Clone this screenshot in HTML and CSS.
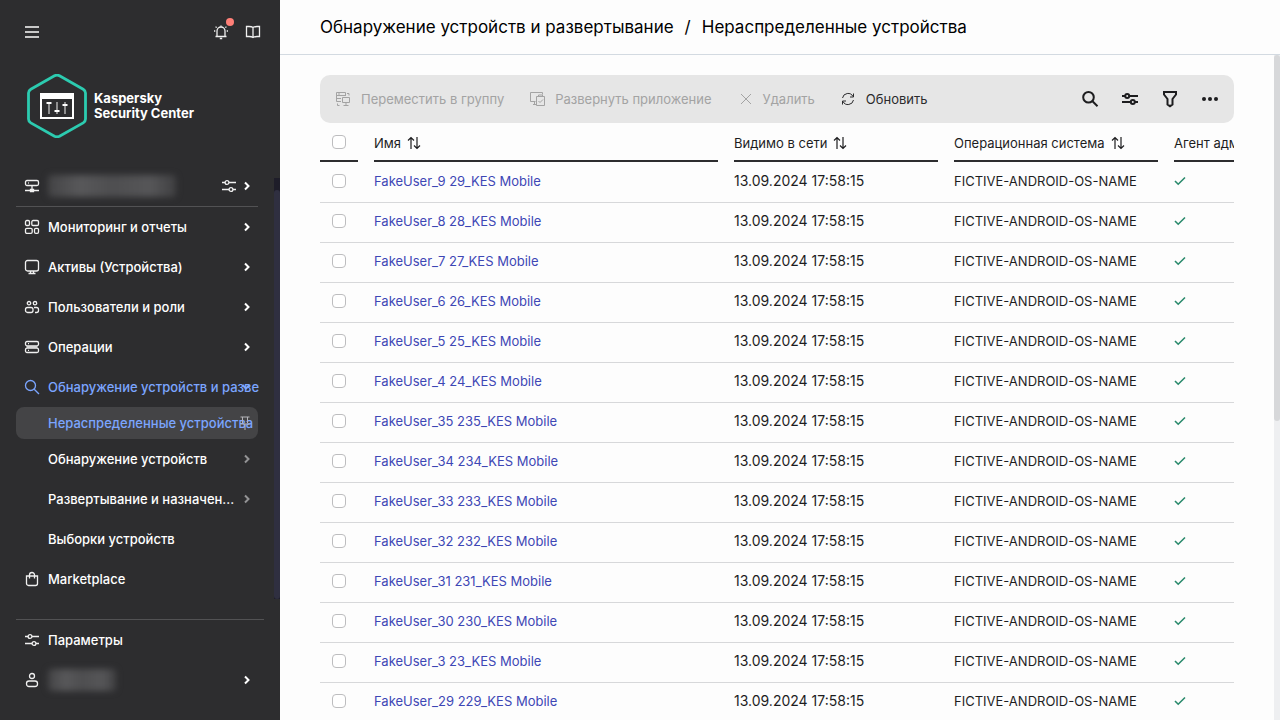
FILE: index.html
```
<!DOCTYPE html>
<html lang="ru">
<head>
<meta charset="utf-8">
<title>Нераспределенные устройства</title>
<link rel="stylesheet" href="styles.css">
</head>
<body>
<div class="app">
  <aside class="sidebar">
    <div class="topbar">
      <button class="icon-btn" type="button" aria-label="Меню">
        <svg class="icon burger" viewBox="0 0 16 16"><path d="M1 3h14M1 8h14M1 13h14"/></svg>
      </button>
      <div class="topbar-right">
        <button class="icon-btn bell" type="button" aria-label="Уведомления">
          <svg class="icon" viewBox="0 0 16 16"><path d="M2.500 12.500h11M4 12.500V7a4 4 0 0 1 8 0v5.500M6.800 14.500h2.400M1 7h1.300M13.700 7H15M2.600 2.600l1 1M13.400 2.600l-1 1M8 1.500V3"/></svg>
          <span class="dot"></span>
        </button>
        <button class="icon-btn" type="button" aria-label="Справка">
          <svg class="icon" viewBox="0 0 16 16"><path d="M8 3.500C7 2.700 5.500 2.500 4 2.500H1.500v10H4c1.500 0 3 .2 4 1 1-.8 2.500-1 4-1h2.500v-10H12c-1.500 0-3 .2-4 1zM8 3.500v10"/></svg>
        </button>
      </div>
    </div>
    <div class="brand">
      <svg class="brand-logo" viewBox="0 0 60 64" aria-hidden="true">
        <path d="M27.500 1.800 3.800 15.200Q1.500 16.600 1.500 19V45q0 2.500 2.300 3.900L27.500 62.200q2.500 1.300 5 0L56.200 48.900Q58.500 47.500 58.500 45V19q0-2.400-2.300-3.800L32.500 1.800q-2.500-1.300-5 0z" fill="none" stroke="#2ccbb0" stroke-width="2.800"/>
        <rect x="14" y="20" width="32" height="24" fill="none" stroke="#fff" stroke-width="2"/>
        <path d="M13 19h34v6H13z" fill="#fff" stroke="none"/>
        <path d="M22 28v12M30 28v12M38 28v12" stroke="#a8a8a8" stroke-width="1.600"/>
        <path d="M19.500 29h5M27.500 37h5M35.500 31h5" stroke="#fff" stroke-width="2"/>
      </svg>
      <div class="brand-name">Kaspersky<br>Security Center</div>
    </div>
    <div class="nav-scroll">
      <nav class="nav">
        <div class="nav-row server">
          <svg class="icon" viewBox="0 0 16 16"><rect x="1.500" y="2.500" width="13" height="5" rx="1.500"/><path d="M4 5h.8M8 7.500v5M1 12.500h14M6.500 11.500h3v2h-3z"/></svg>
          <span class="redacted server-name"></span>
          <button class="icon-btn settings" type="button" aria-label="Свойства">
            <svg class="icon" viewBox="0 0 16 16"><path d="M1 4.500h3.200M8 4.500h7M1 11.500h7M12 11.500h3"/><circle cx="6" cy="4.500" r="1.900"/><circle cx="10" cy="11.500" r="1.900"/></svg>
          </button>
          <svg class="chevron" viewBox="0 0 8 10"><path d="M2 1.500 5.500 5 2 8.500"/></svg>
        </div>
        <a class="nav-row" href="#">
          <svg class="icon" viewBox="0 0 16 16"><rect x="1.500" y="1.500" width="4" height="5" rx="1.300"/><rect x="7.800" y="1.500" width="6.700" height="5" rx="1.300"/><rect x="1.500" y="9.300" width="6.700" height="5" rx="1.300"/><rect x="10.500" y="9.300" width="4" height="5" rx="1.300"/></svg>
          <span class="label">Мониторинг и отчеты</span>
          <svg class="chevron" viewBox="0 0 8 10"><path d="M2 1.500 5.500 5 2 8.500"/></svg>
        </a>
        <a class="nav-row" href="#">
          <svg class="icon" viewBox="0 0 16 16"><rect x="1.500" y="1.500" width="13" height="10.500" rx="2"/><path d="M6.500 12v2.500M9.500 12v2.500M4.500 14.500h7"/></svg>
          <span class="label">Активы (Устройства)</span>
          <svg class="chevron" viewBox="0 0 8 10"><path d="M2 1.500 5.500 5 2 8.500"/></svg>
        </a>
        <a class="nav-row" href="#">
          <svg class="icon" viewBox="0 0 16 16"><circle cx="5" cy="4.200" r="1.700"/><circle cx="11" cy="4.200" r="1.700"/><rect x="1.500" y="8.500" width="7.500" height="5" rx="2"/><path d="M10 8.500h2.500a2 2 0 0 1 2 2v1a2 2 0 0 1-2 2H11"/></svg>
          <span class="label">Пользователи и роли</span>
          <svg class="chevron" viewBox="0 0 8 10"><path d="M2 1.500 5.500 5 2 8.500"/></svg>
        </a>
        <a class="nav-row" href="#">
          <svg class="icon" viewBox="0 0 16 16"><rect x="1.500" y="2.500" width="13" height="4.300" rx="1.500"/><rect x="1.500" y="9.200" width="13" height="4.300" rx="1.500"/><path d="M4 4.600h1M4 11.400h1M2.500 8h11"/></svg>
          <span class="label">Операции</span>
          <svg class="chevron" viewBox="0 0 8 10"><path d="M2 1.500 5.500 5 2 8.500"/></svg>
        </a>
        <a class="nav-row active" href="#">
          <svg class="icon" viewBox="0 0 16 16"><circle cx="6.500" cy="6.500" r="5"/><path d="m10.200 10.200 4.800 4.800"/></svg>
          <span class="label">Обнаружение устройств и разве</span>
          <svg class="chevron over" viewBox="0 0 10 8"><path d="M1.500 2 5 5.500 8.500 2"/></svg>
        </a>
        <a class="nav-row sub selected" href="#">
          <span class="label">Нераспределенные устройства</span>
          <svg class="pin over" viewBox="0 0 12 16"><path d="M1.500 2h9M3.500 2v6M8.500 2v6M1.500 9h9M6 9v6"/></svg>
        </a>
        <a class="nav-row sub dim" href="#">
          <span class="label">Обнаружение устройств</span>
          <svg class="chevron" viewBox="0 0 8 10"><path d="M2 1.500 5.500 5 2 8.500"/></svg>
        </a>
        <a class="nav-row sub dim" href="#">
          <span class="label">Развертывание и назначен...</span>
          <svg class="chevron" viewBox="0 0 8 10"><path d="M2 1.500 5.500 5 2 8.500"/></svg>
        </a>
        <a class="nav-row sub" href="#"><span class="label">Выборки устройств</span></a>
        <a class="nav-row" href="#">
          <svg class="icon" viewBox="0 0 16 16"><path d="M2.500 5h11v7.500a2 2 0 0 1-2 2h-7a2 2 0 0 1-2-2zM5.500 7.500V4a2.500 2.500 0 0 1 5 0v3.500"/></svg>
          <span class="label">Marketplace</span>
        </a>
      </nav>
      <div class="nav-track"><div class="nav-thumb"></div></div>
    </div>
    <div class="bottom">
      <a class="nav-row" href="#">
        <svg class="icon" viewBox="0 0 16 16"><path d="M1 4.500h3.200M8 4.500h7M1 11.500h7M12 11.500h3"/><circle cx="6" cy="4.500" r="1.900"/><circle cx="10" cy="11.500" r="1.900"/></svg>
        <span class="label">Параметры</span>
      </a>
      <div class="nav-row">
        <svg class="icon" viewBox="0 0 16 16"><circle cx="8" cy="4" r="2.500"/><rect x="2.500" y="9" width="11" height="5.500" rx="2.500"/></svg>
        <span class="redacted user-name"></span>
        <svg class="chevron" viewBox="0 0 8 10"><path d="M2 1.500 5.500 5 2 8.500"/></svg>
      </div>
    </div>
  </aside>

  <main class="main">
    <header class="crumbs">
      <a href="#">Обнаружение устройств и развертывание</a>
      <span>/</span>
      <span>Нераспределенные устройства</span>
    </header>
    <div class="body">
      <section class="content">
        <div class="toolbar">
          <button class="tool" type="button" disabled>
            <svg class="tool-icon" viewBox="0 0 16 16"><path d="M6 10.500H1.500v-9h9V5M1.500 4.500h9M1.500 7.500H6M3 3h2M12 2.500h2v2M2.500 12.500v2h2M7.500 6.500h7v5h-7zM11 11.500V15M8.500 14.500h5"/></svg>
            <span>Переместить в группу</span>
          </button>
          <button class="tool" type="button" disabled>
            <svg class="tool-icon" viewBox="0 0 16 16"><path d="M6.500 10.500h-5v-9h12v2M4 13.500h3M5.500 10.500v3M7.500 5.500h8v9h-8zM9.500 5.500v-1.500h4v1.500M9.500 10l1.500 1.500L14 8.500"/></svg>
            <span>Развернуть приложение</span>
          </button>
          <button class="tool" type="button" disabled>
            <svg class="tool-icon" viewBox="0 0 16 16"><path d="m4 3 10 10M14 3 4 13"/></svg>
            <span>Удалить</span>
          </button>
          <button class="tool" type="button">
            <svg class="tool-icon" viewBox="0 0 16 16"><path d="M2.500 7A5.600 5.600 0 0 1 13 5.500M13.500 2.500v3.500H10M13.500 9A5.600 5.600 0 0 1 3 10.500M2.500 13.500V10H6"/></svg>
            <span>Обновить</span>
          </button>
          <div class="tool-right">
            <button class="icon-btn" type="button" aria-label="Поиск"><svg class="big" viewBox="0 0 18 18"><circle cx="7.500" cy="7.200" r="5.300"/><path d="m11.500 11.200 5 5"/></svg></button>
            <button class="icon-btn" type="button" aria-label="Столбцы"><svg class="big" viewBox="0 0 18 18"><path d="M1 6h3.500M8 6h9M1 12h9M13.500 12H17"/><circle cx="6.200" cy="6" r="2"/><circle cx="11.800" cy="12" r="2"/></svg></button>
            <button class="icon-btn" type="button" aria-label="Фильтр"><svg class="big" viewBox="0 0 18 18"><path d="M3 2h12v2.500L11.500 9v5.500L9 16.200 6.500 14.500V9L3 4.500z"/></svg></button>
            <button class="icon-btn" type="button" aria-label="Еще"><svg class="big solid" viewBox="0 0 18 18"><circle cx="3" cy="9" r="2"/><circle cx="9" cy="9" r="2"/><circle cx="15" cy="9" r="2"/></svg></button>
          </div>
        </div>
        <div class="table-wrap">
          <table class="grid">
            <colgroup><col class="c-check"><col class="c-name"><col class="c-mid"><col class="c-mid"><col class="c-mid"></colgroup>
            <thead>
              <tr>
                <th><div class="head check"><input type="checkbox" aria-label="Выбрать все"></div></th>
                <th><div class="head">Имя <svg class="sort" viewBox="0 0 14 14"><path d="M4 13V1.500M1 4.500l3-3 3 3M10 1v11.500M7 9.500l3 3 3-3"/></svg></div></th>
                <th><div class="head">Видимо в сети <svg class="sort" viewBox="0 0 14 14"><path d="M4 13V1.500M1 4.500l3-3 3 3M10 1v11.500M7 9.500l3 3 3-3"/></svg></div></th>
                <th><div class="head">Операционная система <svg class="sort" viewBox="0 0 14 14"><path d="M4 13V1.500M1 4.500l3-3 3 3M10 1v11.500M7 9.500l3 3 3-3"/></svg></div></th>
                <th><div class="head">Агент администрирования</div></th>
              </tr>
            </thead>
            <tbody id="rows"></tbody>
          </table>
        </div>
      </section>
      <div class="page-track"><div class="page-thumb"></div></div>
    </div>
  </main>
</div>
<script src="app.js"></script>
</body>
</html>
```
FILE: styles.css
```
* { box-sizing: border-box; }

body {
  margin: 0;
  font-family: Inter, "Noto Sans", sans-serif;
  font-size: 13px;
  line-height: 20px;
  color: #1d1d1f;
  background: #fdfdfd;
}

a { color: inherit; text-decoration: none; }

button {
  padding: 0;
  border: 0;
  background: none;
  font: inherit;
  color: inherit;
}

svg {
  display: block;
  flex: none;
  fill: none;
  stroke: currentColor;
}

.app { display: flex; height: 100vh; overflow: hidden; }

/* Sidebar */
.sidebar {
  display: flex;
  flex-direction: column;
  flex: none;
  width: 280px;
  background: #2d2d2f;
  color: #fff;
  font-weight: 500;
}

.icon { width: 16px; height: 16px; color: #f0f0f0; stroke-width: 1.3; }
.burger { color: #c8c8c8; stroke-width: 2; }

.topbar {
  display: flex;
  align-items: center;
  justify-content: space-between;
  height: 64px;
  padding: 0 19px 0 24px;
}

.topbar-right { display: flex; gap: 16px; }

.bell { position: relative; }

.dot {
  position: absolute;
  top: -6px;
  right: -5px;
  width: 8px;
  height: 8px;
  border-radius: 50%;
  background: #ff7f77;
}

.brand {
  display: flex;
  align-items: center;
  gap: 7px;
  height: 84px;
  padding-left: 27px;
}

.brand-logo { width: 60px; height: 64px; }
.brand-name { font-weight: 700; line-height: 15px; }

.nav-scroll {
  display: flex;
  justify-content: space-between;
  margin-top: 17px;
}

.nav { width: 242px; margin-left: 16px; }

.nav-row {
  display: flex;
  position: relative;
  align-items: center;
  gap: 8px;
  height: 40px;
  padding: 0 7px 0 8px;
  white-space: nowrap;
}

.label { padding-bottom: 1px; }

.server {
  height: 42px;
  border-bottom: 1px solid #525254;
}

.chevron {
  width: 8px;
  height: 10px;
  margin-left: auto;
  stroke-width: 2;
}

.settings { margin-left: auto; }
.settings + .chevron { margin-left: -2px; }
.sub { padding-left: 32px; }
.dim .chevron { color: #939395; }
.active, .selected { color: #7ba5ff; }
.active .icon { color: #7ba5ff; }

.selected {
  height: 32px;
  border-radius: 8px;
  background: #444446;
}

.over { position: absolute; right: 7px; }
.chevron.over { width: 10px; height: 8px; }
.pin { width: 12px; height: 16px; color: #b4b4b8; }

.nav-track {
  width: 6px;
  margin-top: 13px;
  padding-top: 12px;
  background: #1e1d29;
}

.nav-thumb { height: 100%; border-radius: 3px; background: #2f2f40; }

.redacted {
  height: 22px;
  border-radius: 4px;
  background: linear-gradient(90deg, #444446, #58585a 25%, #4e4e50 50%, #565658 80%, #404042);
  filter: blur(3px);
}

.server-name { width: 128px; }
.user-name { width: 68px; }

.bottom {
  width: 248px;
  margin: 20px 0 0 16px;
  border-top: 1px solid #525254;
}

.bottom .nav-row { padding-right: 13px; }

/* Main area */
.main {
  display: flex;
  flex-direction: column;
  flex: 1;
  min-width: 0;
}

.crumbs {
  display: flex;
  flex: none;
  align-items: center;
  gap: 11px;
  height: 55px;
  padding: 0 40px;
  border-bottom: 1px solid #d3dae1;
  font-size: 17px;
  line-height: 24px;
  color: #000;
  white-space: nowrap;
}

.body { display: flex; flex: 1; min-height: 0; }

.content {
  display: flex;
  flex-direction: column;
  flex: 1;
  min-width: 0;
  padding: 20px 40px 0;
}

.toolbar {
  display: flex;
  flex: none;
  align-items: center;
  gap: 25px;
  height: 48px;
  padding: 0 15px;
  border-radius: 10px;
  background: #e6e6e6;
  white-space: nowrap;
}

.tool { display: flex; align-items: center; gap: 10px; color: #2b2b2d; }
.tool:disabled { color: #a3a3a3; }
.tool-icon { width: 16px; height: 16px; stroke-width: 1; }

.tool-right { display: flex; gap: 22px; margin-left: auto; }
.big { width: 18px; height: 18px; stroke-width: 2; }
.solid { fill: currentColor; stroke: none; }

.table-wrap { flex: 1; overflow: hidden; }

.grid {
  width: 1074px;
  table-layout: fixed;
  border-collapse: collapse;
}

.c-check { width: 54px; }
.c-name { width: 360px; }
.c-mid { width: 220px; }

th { padding: 0 16px 0 0; font-weight: 400; text-align: left; }

.head {
  display: flex;
  align-items: center;
  gap: 6px;
  height: 39px;
  padding-top: 2px;
  border-bottom: 2px solid #2d2d2f;
  color: #1d1d1f;
  white-space: nowrap;
}

.head.check { padding-top: 0; }

.sort { width: 14px; height: 14px; stroke-width: 1.2; }

td {
  height: 40px;
  padding: 0 0 2px;
  border-bottom: 1px solid #d7d8da;
}

.date { font-size: 14px; }

.check { display: flex; align-items: center; padding-left: 12px; }

input[type="checkbox"] {
  appearance: none;
  display: block;
  width: 14px;
  height: 14px;
  margin: 0;
  border: 1px solid #bdbdbf;
  border-radius: 4px;
  background: #fff;
}

td a { color: #3d47b5; }
.ok { width: 12px; height: 10px; color: #2a8a6c; stroke-width: 1.6; }

.page-track { width: 6px; background: #eeeff1; }
.page-thumb { height: 55%; border-radius: 3px; background: #d7d8da; }
```
FILE: app.js
```
const names = [
  "FakeUser_9 29", "FakeUser_8 28", "FakeUser_7 27", "FakeUser_6 26", "FakeUser_5 25",
  "FakeUser_4 24", "FakeUser_35 235", "FakeUser_34 234", "FakeUser_33 233", "FakeUser_32 232",
  "FakeUser_31 231", "FakeUser_30 230", "FakeUser_3 23", "FakeUser_29 229"
];
document.getElementById("rows").innerHTML = names.map(n => `
  <tr>
    <td><div class="check"><input type="checkbox" aria-label="${n}_KES Mobile"></div></td>
    <td><a href="#">${n}_KES Mobile</a></td>
    <td class="date">13.09.2024 17:58:15</td>
    <td>FICTIVE-ANDROID-OS-NAME</td>
    <td><svg class="ok" viewBox="0 0 12 10"><path d="M1 5l3.200 3.200L11 1.500"/></svg></td>
  </tr>`).join("");
```
